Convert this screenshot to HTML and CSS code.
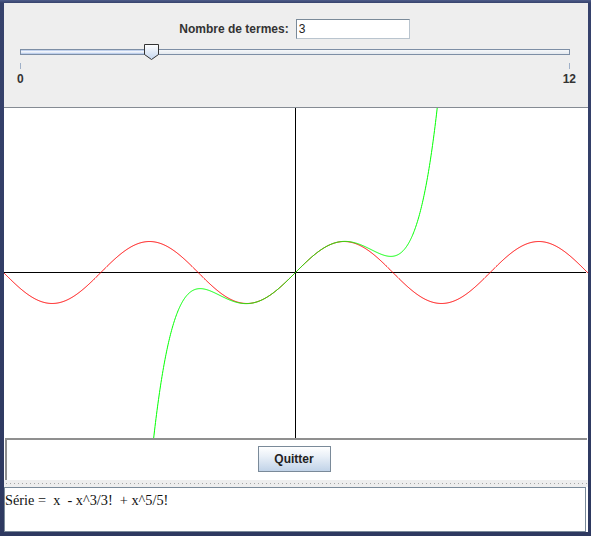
FILE: index.html
```html
<!DOCTYPE html>
<html>
<head>
<meta charset="utf-8">
<link rel="stylesheet" href="styles.css">
</head>
<body>
<div class="window">
  <div class="content">
    <div class="controls">
      <div class="row">
        <span class="lbl">Nombre de termes:</span>
        <div class="field">3</div>
      </div>
      <div class="slider">
        <div class="track"><div class="fill"></div></div>
        <svg class="thumb" width="16" height="17" viewBox="0 0 16 17">
          <defs>
            <linearGradient id="tg" x1="0" y1="0" x2="0" y2="1">
              <stop offset="0" stop-color="#ffffff"/>
              <stop offset="1" stop-color="#c3d5ee"/>
            </linearGradient>
          </defs>
          <path d="M0.5 0.5 H14.5 V10.5 L7.5 15.5 L0.5 10.5 Z" fill="url(#tg)" stroke="#333" stroke-width="1"/>
        </svg>
      </div>
      <div class="ticks"><span class="tick"></span><span class="tick"></span></div>
      <div class="labels"><span>0</span><span>12</span></div>
    </div>
    <div class="plot">
      <svg id="plot" width="584" height="330" viewBox="0 0 584 330">
        <line x1="0" y1="164.5" x2="582" y2="164.5" stroke="#000" stroke-width="1"/>
        <line x1="291.5" y1="0" x2="291.5" y2="330" stroke="#000" stroke-width="1"/>
        <polyline id="sine" fill="none" stroke="#ff0000" stroke-width="1" points=""/>
        <polyline id="series" fill="none" stroke="#00ff00" stroke-width="1" points=""/>
      </svg>
    </div>
    <div class="btnpanel"><button class="btn">Quitter</button></div>
    <div class="divider"><div class="dots"></div></div>
    <div class="textarea">Série =  x  - x^3/3!  + x^5/5!</div>
  </div>
</div>
<script src="plot.js"></script>
</body>
</html>
```

FILE: styles.css
```css
html, body {
  margin: 0;
  padding: 0;
}
body {
  width: 591px;
  height: 536px;
  overflow: hidden;
  background: #2a3558;
}
.window {
  box-sizing: border-box;
  width: 591px;
  height: 536px;
  padding: 3px 3px 4px 4px;
  background: linear-gradient(180deg, #4f5d8a 0, #36426c 3px, #2e3960 100%);
}
.content {
  width: 584px;
  height: 529px;
  background: #ffffff;
  display: flex;
  flex-direction: column;
  font-family: "Liberation Sans", Arial, sans-serif;
}
.controls {
  box-sizing: border-box;
  height: 105px;
  padding-top: 16px;
  border-bottom: 1px solid #858b93;
  background: #eeeeee;
  display: flex;
  flex-direction: column;
}
.row {
  display: flex;
  justify-content: center;
  align-items: center;
  gap: 7px;
  height: 20px;
  padding-right: 3px;
}
.lbl {
  font-weight: bold;
  font-size: 12px;
  color: #333333;
}
.field {
  box-sizing: border-box;
  width: 114px;
  height: 20px;
  border: 1px solid #7a8a99;
  border-right-color: #b9c4ce;
  border-bottom-color: #b9c4ce;
  background: #ffffff;
  font-size: 12px;
  color: #222;
  line-height: 18px;
  padding-left: 2px;
}
.slider {
  position: relative;
  margin: 5px 18px 0 16px;
  height: 16px;
}
.track {
  position: absolute;
  left: 0;
  right: 0;
  top: 5px;
  height: 6px;
  box-sizing: border-box;
  border: 1px solid #7d8ea5;
  background: linear-gradient(180deg, #f6f8fa 0, #e3e8ee 100%);
}
.fill {
  width: 124px;
  height: 100%;
  background: linear-gradient(180deg, #a9c0e6 0, #ffffff 45%, #a8bfe6 100%);
}
.thumb {
  position: absolute;
  left: 124px;
  top: 0;
}
.ticks {
  display: flex;
  justify-content: space-between;
  margin: 3px 18px 0 16px;
  height: 6px;
}
.tick {
  width: 1px;
  height: 6px;
  background: #9fb0c8;
}
.labels {
  display: flex;
  justify-content: space-between;
  margin: 3px 12px 0 13px;
  font-weight: bold;
  font-size: 12px;
  line-height: 14px;
  color: #333333;
}
.plot {
  height: 330px;
  background: #ffffff;
  overflow: hidden;
}
.plot svg {
  display: block;
}
.btnpanel {
  box-sizing: border-box;
  height: 42px;
  margin-left: 1px;
  margin-right: 1px;
  border-top: 2px solid #8f8f8f;
  border-left: 2px solid #8f8f8f;
  background: #ffffff;
  display: flex;
  justify-content: center;
  align-items: flex-start;
  padding-top: 6px;
  padding-right: 6px;
}
.btn {
  box-sizing: border-box;
  width: 73px;
  height: 26px;
  border: 1px solid #7a8a99;
  border-radius: 0;
  background: linear-gradient(180deg, #ffffff 0, #e8eff7 40%, #c1d3e8 100%);
  font-family: "Liberation Sans", Arial, sans-serif;
  font-weight: bold;
  font-size: 12px;
  color: #222;
  padding: 0;
}
.divider {
  height: 7px;
  background: #eeeeee;
  padding-top: 3px;
  box-sizing: border-box;
}
.dots {
  height: 1px;
  margin-left: 2px;
  background: repeating-linear-gradient(90deg, #a4a4a4 0 1px, transparent 1px 4px);
}
.textarea {
  box-sizing: border-box;
  height: 45px;
  margin-right: 2px;
  border: 1px solid #7a8a99;
  background: #ffffff;
  font-family: "Liberation Serif", "Times New Roman", serif;
  font-size: 14.3px;
  line-height: 16px;
  color: #111;
  white-space: pre;
  padding: 4px 0 0 0;
}
```

FILE: plot.js
```js
(function () {
  var W = 584, H = 330;
  var cx = 291.5, cy = 164.5;
  var s = W / (6 * Math.PI);
  function pts(f, clip) {
    var out = [];
    for (var px = 0; px <= W; px += 0.5) {
      var x = (px - cx) / s;
      var y = f(x);
      var py = cy - y * s;
      if (clip) {
        if (py < -50) py = -50;
        if (py > H + 50) py = H + 50;
      }
      out.push(px.toFixed(2) + "," + py.toFixed(2));
    }
    return out.join(" ");
  }
  document.getElementById("sine").setAttribute("points", pts(Math.sin, false));
  document.getElementById("series").setAttribute("points", pts(function (x) {
    return x - Math.pow(x, 3) / 6 + Math.pow(x, 5) / 120;
  }, true));
})();
```
